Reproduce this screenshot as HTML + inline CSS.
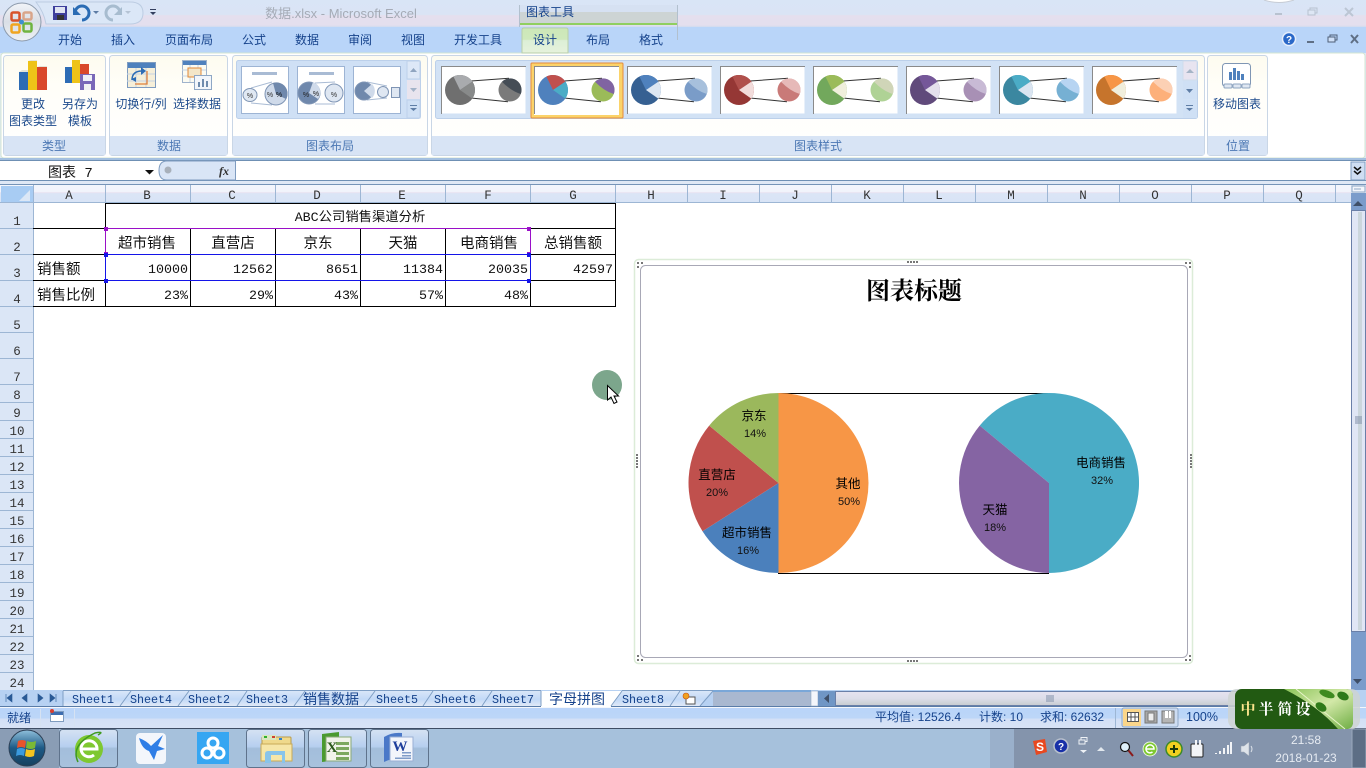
<!DOCTYPE html>
<html lang="zh">
<head>
<meta charset="utf-8">
<title>数据.xlsx - Microsoft Excel</title>
<style>
html,body{margin:0;padding:0;background:#fff;width:1366px;height:768px;overflow:hidden}
svg{display:block;position:absolute;left:0;top:0}
text{font-family:"Liberation Sans","Noto Sans CJK SC",sans-serif;font-size:12px;fill:#15428b}
.m{text-anchor:middle}
.e{text-anchor:end}
.mono{font-family:"Liberation Mono","Noto Sans CJK SC",monospace;font-size:13.33px;fill:#111}
.cell{font-family:"Liberation Mono","Noto Sans CJK SC",monospace;font-size:14.5px;fill:#111}
.hd{font-family:"Liberation Mono",monospace;font-size:12.5px;fill:#333}
.tab{font-family:"Liberation Mono",monospace;font-size:11.7px;fill:#15428b}
.cjkt{font-size:14px;fill:#15428b}
.rb{font-size:12px;fill:#1c4a8c}
.gl{font-size:12px;fill:#4c78b4}
.lb{font-size:12.5px;fill:#000}
.pc{font-size:11px;fill:#111}
</style>
</head>
<body>
<svg width="1366" height="768" viewBox="0 0 1366 768" xmlns="http://www.w3.org/2000/svg">
<defs>
<linearGradient id="hdr" x1="0" y1="0" x2="0" y2="1"><stop offset="0" stop-color="#f3f6fc"/><stop offset=".38" stop-color="#f1f3fb"/><stop offset=".42" stop-color="#e8e2f0"/><stop offset=".48" stop-color="#dbe5f6"/><stop offset="1" stop-color="#d8e4f6"/></linearGradient>
<linearGradient id="title" x1="0" y1="0" x2="0" y2="1"><stop offset="0" stop-color="#d9e5f6"/><stop offset=".54" stop-color="#dae4f5"/><stop offset=".58" stop-color="#e5dfee"/><stop offset=".93" stop-color="#e4dfee"/><stop offset="1" stop-color="#cfdcef"/></linearGradient>
<linearGradient id="grp" x1="0" y1="0" x2="0" y2="1"><stop offset="0" stop-color="#fdfbef"/><stop offset=".3" stop-color="#fffef8"/><stop offset="1" stop-color="#ffffff"/></linearGradient>
<linearGradient id="tabg" x1="0" y1="0" x2="0" y2="1"><stop offset="0" stop-color="#d8e6f8"/><stop offset=".55" stop-color="#c2d9f7"/><stop offset="1" stop-color="#e0e9f7"/></linearGradient>
<linearGradient id="actv" x1="0" y1="0" x2="0" y2="1"><stop offset="0" stop-color="#cce8b8"/><stop offset=".45" stop-color="#cfe9bc"/><stop offset=".5" stop-color="#dcefd6"/><stop offset="1" stop-color="#e6f2dc"/></linearGradient>
<linearGradient id="stat" x1="0" y1="0" x2="0" y2="1"><stop offset="0" stop-color="#b9d4f9"/><stop offset=".5" stop-color="#bcd6f8"/><stop offset=".55" stop-color="#d3e0f6"/><stop offset="1" stop-color="#d8e3f6"/></linearGradient>
<linearGradient id="task" x1="0" y1="0" x2="0" y2="1"><stop offset="0" stop-color="#d5e2f3"/><stop offset=".45" stop-color="#b6cfef"/><stop offset=".5" stop-color="#a3bedb"/><stop offset="1" stop-color="#a8c2dd"/></linearGradient>
<linearGradient id="hsc" x1="0" y1="0" x2="0" y2="1"><stop offset="0" stop-color="#e6e3f0"/><stop offset=".5" stop-color="#dcdde9"/><stop offset="1" stop-color="#c7ccd0"/></linearGradient>
<linearGradient id="orb" x1="0" y1="0" x2="0" y2="1"><stop offset="0" stop-color="#8fc0dc"/><stop offset=".5" stop-color="#1d5a86"/><stop offset="1" stop-color="#16405f"/></linearGradient>
<linearGradient id="office" x1="0" y1="0" x2="0" y2="1"><stop offset="0" stop-color="#f2f4f8"/><stop offset=".5" stop-color="#d9dee6"/><stop offset="1" stop-color="#eef1f5"/></linearGradient>
<linearGradient id="leaf" x1="0" y1="0" x2="1" y2="1"><stop offset="0" stop-color="#8cc45a"/><stop offset=".5" stop-color="#d3e8a8"/><stop offset="1" stop-color="#6fae44"/></linearGradient>
<path id="bt" d="M19 24L12.4 10.500A15 15 0 0 1 31.400 15.600Z"/>
<path id="br" d="M19 24L31.400 15.600A15 15 0 0 1 31.290 32.600Z"/>
<path id="st" d="M61 15.700A11.500 11.500 0 0 1 79.800 28Q70 25 61 15.700Z"/>
<g id="tl"><rect x=".5" y=".5" width="84" height="47" fill="#fff"/><path d="M.5 48V.5H85" fill="none" stroke="#8a8a8a"/><path d="M30 15L68 12.300M30 32L67 35.700" stroke="#333" stroke-width="1" fill="none"/></g>
<g id="lay"><rect x=".5" y=".5" width="47" height="47" fill="#fff" stroke="#9db4d4"/></g>
</defs>

<!-- title bar -->
<rect x="0" y="0" width="1366" height="27" fill="url(#title)"/>
<!-- tab row -->
<rect x="0" y="27" width="1366" height="26" fill="#b9d5f9"/>
<!-- ribbon back -->
<rect x="0" y="53" width="1366" height="107" fill="#dde8f6"/>
<rect x="1" y="53" width="1364" height="105" rx="3" fill="#fff" stroke="#d4e6d2"/>
<rect x="0" y="158" width="1366" height="3" fill="#a4c0e0"/>

<!-- QAT -->
<path d="M36 2H130Q143 2 143 13Q143 24 130 24H46Q44 12 36 2Z" fill="#dbe7f7" stroke="#bccce2"/>
<circle cx="22" cy="22" r="19" fill="url(#office)" stroke="#8d9bad"/>
<g fill="none" stroke-width="2.500">
<rect x="11.500" y="12.500" width="8" height="8" rx="1.500" stroke="#d8532a"/>
<rect x="23.500" y="12.500" width="8" height="7" rx="1.500" stroke="#d9a58a"/>
<rect x="11.500" y="24.500" width="8" height="8" rx="1.500" stroke="#f0a51f"/>
<rect x="23.500" y="23.500" width="8" height="8" rx="1.500" stroke="#6fb43f"/>
</g>
<circle cx="21.500" cy="22" r="2.500" fill="#3f8fd0"/>
<rect x="53" y="6" width="14" height="14" fill="#3d3f9c"/><rect x="55" y="7" width="10" height="6" fill="#dfe4f2"/><rect x="57" y="15" width="7" height="5" fill="#333"/>
<path d="M75 13A7 7 0 1 1 82 20" fill="none" stroke="#2b6cb4" stroke-width="3"/><path d="M73 7V15H81Z" fill="#2b6cb4"/>
<path d="M93 11h6l-3 3z" fill="#5d7ca4"/>
<path d="M120 13A7 7 0 1 0 113 20" fill="none" stroke="#a7bccf" stroke-width="3"/><path d="M122 7V15H114Z" fill="#a7bccf"/>
<path d="M125 11h6l-3 3z" fill="#b5c3d4"/>
<path d="M150 9h6v1h-6zM150 12h6l-3 3z" fill="#333f5f"/>
<text x="341" y="18" class="m" style="fill:#a5abb6;font-size:13px">数据.xlsx - Microsoft Excel</text>

<!-- window buttons -->
<path d="M1264 0Q1279 5 1294 0" fill="#fff" stroke="#c7ccd5"/>
<path d="M1275 13h7v2h-7z" fill="#b8c2d0"/>
<rect x="1310" y="8" width="7" height="5" fill="none" stroke="#b8c2d0"/><rect x="1308" y="10" width="7" height="5" fill="#dde6f4" stroke="#b8c2d0"/>
<path d="M1345 8l8 8M1353 8l-8 8" stroke="#bcc6d4" stroke-width="2"/>

<!-- contextual tab -->
<rect x="519" y="5" width="159" height="7" fill="#d6e1f2"/>
<rect x="519" y="12" width="159" height="11" fill="#cdd4d4"/>
<rect x="519" y="23" width="159" height="2" fill="#90cf60"/>
<path d="M519.500 5V27M677.500 5V40" stroke="#b2c0ce"/>
<text x="550" y="16" class="m" style="font-size:12px">图表工具</text>

<!-- tabs -->
<path d="M522 53V30Q522 28 524 28H566Q568 28 568 30V53Z" fill="url(#actv)" stroke="#b9cfa8"/>
<text x="70" y="44" class="m">开始</text>
<text x="123" y="44" class="m">插入</text>
<text x="189" y="44" class="m">页面布局</text>
<text x="254" y="44" class="m">公式</text>
<text x="307" y="44" class="m">数据</text>
<text x="360" y="44" class="m">审阅</text>
<text x="413" y="44" class="m">视图</text>
<text x="478" y="44" class="m">开发工具</text>
<text x="545" y="44" class="m">设计</text>
<text x="598" y="44" class="m">布局</text>
<text x="651" y="44" class="m">格式</text>
<circle cx="1289" cy="39" r="6.500" fill="#2a68c8" stroke="#e6eefb" stroke-width="1.500"/><text x="1289" y="43" class="m" style="fill:#fff;font-size:10px;font-weight:bold">?</text>
<path d="M1307 41h7v2h-7z" fill="#5f6f85"/>
<rect x="1330" y="35" width="7" height="5" fill="none" stroke="#4f6078"/><rect x="1328" y="37" width="7" height="5" fill="#cfe0f8" stroke="#4f6078"/>
<path d="M1351 35l7 8M1358 35l-7 8" stroke="#5f6f85" stroke-width="2"/>

<!-- ribbon groups -->
<g stroke="#c9d6e6">
<rect x="3.500" y="55.500" width="102" height="100" rx="3" fill="url(#grp)"/>
<rect x="109.500" y="55.500" width="118" height="100" rx="3" fill="url(#grp)"/>
<rect x="232.500" y="55.500" width="195" height="100" rx="3" fill="url(#grp)"/>
<rect x="431.500" y="55.500" width="773" height="100" rx="3" fill="url(#grp)"/>
<rect x="1207.500" y="55.500" width="60" height="100" rx="3" fill="url(#grp)"/>
</g>
<rect x="4" y="136" width="101" height="19" fill="#d8e4f5"/>
<rect x="110" y="136" width="117" height="19" fill="#d8e4f5"/>
<rect x="233" y="136" width="194" height="19" fill="#d8e4f5"/>
<rect x="432" y="136" width="772" height="19" fill="#d8e4f5"/>
<rect x="1208" y="136" width="59" height="19" fill="#d8e4f5"/>
<text x="54" y="150" class="m gl">类型</text>
<text x="169" y="150" class="m gl">数据</text>
<text x="330" y="150" class="m gl">图表布局</text>
<text x="818" y="150" class="m gl">图表样式</text>
<text x="1238" y="150" class="m gl">位置</text>

<text x="33" y="108" class="m rb">更改</text>
<text x="33" y="125" class="m rb">图表类型</text>
<text x="80" y="108" class="m rb">另存为</text>
<text x="80" y="125" class="m rb">模板</text>
<text x="141" y="108" class="m rb">切换行/列</text>
<text x="197" y="108" class="m rb">选择数据</text>
<text x="1237" y="108" class="m rb">移动图表</text>

<!-- chart type icons -->
<rect x="19" y="72" width="9" height="18" fill="#2d6cb5"/><rect x="28" y="61" width="9" height="29" fill="#eec318"/><rect x="37" y="67" width="10" height="23" fill="#d9482b"/>
<path d="M19 72l3-2h6v2zM28 61l3-1h6v1zM37 67l3-1h7v1z" fill="#e3e3d8"/>
<rect x="65" y="67" width="7" height="16" fill="#2d6cb5"/><rect x="72" y="60" width="8" height="23" fill="#eec318"/><rect x="80" y="64" width="9" height="18" fill="#d9482b"/>
<rect x="80" y="74" width="15" height="16" fill="#7a68b8"/><rect x="83" y="75" width="9" height="6" fill="#eef0f8"/><rect x="84" y="84" width="7" height="6" fill="#f2f2f2"/>

<!-- switch / select icons -->
<rect x="127.500" y="62.500" width="28" height="25" fill="#f6efd9" stroke="#7f9cc0"/>
<rect x="128" y="63" width="27" height="5" fill="#4f81bd"/>
<path d="M127 74h28M127 81h28M136 68v19M146 68v19" stroke="#c5d3e4"/>
<path d="M132 80Q132 71 142 71" fill="none" stroke="#2d6cb5" stroke-width="1.500"/><path d="M141 67l5 4-5 4z" fill="#2d6cb5"/>
<path d="M147 71V84H135" fill="none" stroke="#e0803a" stroke-width="1.300"/><path d="M131 79l5 -2v5z" fill="#2d6cb5"/>
<rect x="182.500" y="60.500" width="24" height="22" fill="#fbfbf2" stroke="#9fb3cc"/>
<rect x="183" y="61" width="23" height="4" fill="#4f81bd"/>
<path d="M182 70h24M182 76h24M190 65v17M198 65v17" stroke="#c5d3e4"/>
<rect x="188" y="68" width="13" height="9" fill="#f3e6c8" stroke="#e0883a"/>
<rect x="194.500" y="75.500" width="17" height="14" fill="#f2f6fb" stroke="#8ea7c5"/>
<path d="M198 87v-5h2v5zM202 87v-8h2v8zM206 87v-6h2v6z" fill="#6f8cae"/>

<!-- layout gallery -->
<rect x="236.500" y="60.500" width="184" height="58" rx="2" fill="#cfe0f5" stroke="#bcd0ea"/>
<use href="#lay" x="241" y="66"/><use href="#lay" x="297" y="66"/><use href="#lay" x="353" y="66"/>
<rect x="252" y="72" width="25" height="3" fill="#a9bbd4"/>
<rect x="309" y="72" width="25" height="3" fill="#a9bbd4"/>
<path d="M251 88L272 82M251 103L272 105" stroke="#a9bbd4" fill="none"/>
<ellipse cx="250" cy="95" rx="7" ry="6.500" fill="#e0e8f3" stroke="#7f95b5"/>
<circle cx="276" cy="94" r="11" fill="#cfdaea" stroke="#7f95b5"/><path d="M276 94L273 83A11 11 0 0 1 286 99Z" fill="#6f88ac"/>
<text x="250" y="98" class="m" style="font-size:7px;fill:#333">%</text><text x="270" y="97" class="m" style="font-size:7px;fill:#333">%</text><text x="279" y="97" class="m" style="font-size:7px;fill:#111">%</text>
<path d="M315 83L335 82M315 104L335 104" stroke="#a9bbd4" fill="none"/>
<circle cx="309" cy="93" r="11" fill="#6f88ac" stroke="#7f95b5"/><path d="M309 93L313 82A11 11 0 0 1 318 99Z" fill="#cfdaea"/>
<circle cx="334" cy="93" r="9" fill="#dfe7f2" stroke="#7f95b5"/>
<text x="306" y="97" class="m" style="font-size:7px;fill:#222">%</text><text x="316" y="96" class="m" style="font-size:7px;fill:#222">%</text><text x="334" y="97" class="m" style="font-size:7px;fill:#333">%</text>
<path d="M367 82L387 86M367 100L387 98" stroke="#a9bbd4" fill="none"/>
<circle cx="364" cy="91" r="9" fill="#6f88ac" stroke="#7f95b5"/><path d="M364 91L372 84A10 10 0 0 1 372 98Z" fill="#cfdaea"/>
<circle cx="383" cy="92" r="5.500" fill="#dfe7f2" stroke="#7f95b5"/>
<rect x="391.500" y="87.500" width="8" height="10" fill="#dfe7f2" stroke="#7f95b5"/>
<rect x="407" y="61" width="13" height="18" fill="#dde8f7" stroke="#bcd0ea"/><rect x="407" y="80" width="13" height="19" fill="#e8e4ee"/><rect x="407" y="100" width="13" height="18" fill="#cfe0f5" stroke="#bcd0ea"/>
<path d="M410 72l3.500-4 3.500 4z" fill="#8fa5c0"/><path d="M410 88h7l-3.500 4z" fill="#a3b3c8"/><path d="M410 105h7v1h-7zM410 108h7l-3.500 3z" fill="#5f7ea6"/>

<!-- chart styles gallery -->
<rect x="435.500" y="60.500" width="762" height="58" rx="2" fill="#d2e2f5" stroke="#bcd0ea"/>
<rect x="531" y="63" width="92" height="55" rx="1" fill="#fbd36a" stroke="#e58b3c"/>
<rect x="534" y="66" width="85" height="49" fill="#fff"/>
<g transform="translate(441,66)"><use href="#tl"/><circle cx="19" cy="24" r="15" fill="#6f6f6f"/><use href="#bt" fill="#a9abae"/><use href="#br" fill="#888a8a"/><circle cx="69" cy="24" r="11.500" fill="#7a7a7a"/><use href="#st" fill="#454d56"/></g>
<g transform="translate(534,66)"><use href="#tl"/><circle cx="19" cy="24" r="15" fill="#4f81bd"/><use href="#bt" fill="#c0504d"/><use href="#br" fill="#4bacc6"/><circle cx="69" cy="24" r="11.500" fill="#9bbb59"/><use href="#st" fill="#8064a2"/></g>
<g transform="translate(627,66)"><use href="#tl"/><circle cx="19" cy="24" r="15" fill="#366092"/><use href="#bt" fill="#4f81bd"/><use href="#br" fill="#dce6f2"/><circle cx="69" cy="24" r="11.500" fill="#7a9cc8"/><use href="#st" fill="#a7c0dc"/></g>
<g transform="translate(720,66)"><use href="#tl"/><circle cx="19" cy="24" r="15" fill="#953735"/><use href="#bt" fill="#b0504c"/><use href="#br" fill="#f2dcdb"/><circle cx="69" cy="24" r="11.500" fill="#c97a78"/><use href="#st" fill="#e6b9b8"/></g>
<g transform="translate(813,66)"><use href="#tl"/><circle cx="19" cy="24" r="15" fill="#72a85c"/><use href="#bt" fill="#9bbb59"/><use href="#br" fill="#f0efdc"/><circle cx="69" cy="24" r="11.500" fill="#afd295"/><use href="#st" fill="#d0d5b8"/></g>
<g transform="translate(906,66)"><use href="#tl"/><circle cx="19" cy="24" r="15" fill="#604a7b"/><use href="#bt" fill="#755799"/><use href="#br" fill="#e4dfec"/><circle cx="69" cy="24" r="11.500" fill="#a890b5"/><use href="#st" fill="#c8bad5"/></g>
<g transform="translate(999,66)"><use href="#tl"/><circle cx="19" cy="24" r="15" fill="#3b87a0"/><use href="#bt" fill="#4bacc6"/><use href="#br" fill="#dbe5f1"/><circle cx="69" cy="24" r="11.500" fill="#76b0d3"/><use href="#st" fill="#b7d4f2"/></g>
<g transform="translate(1092,66)"><use href="#tl"/><circle cx="19" cy="24" r="15" fill="#c6742c"/><use href="#bt" fill="#f79646"/><use href="#br" fill="#f0eedc"/><circle cx="69" cy="24" r="11.500" fill="#fdb07a"/><use href="#st" fill="#fcd0b4"/></g>
<rect x="1183" y="61" width="14" height="19" fill="#e8e4f0" stroke="#cfdcec"/><rect x="1183" y="81" width="14" height="18" fill="#cfe0f5"/><rect x="1183" y="100" width="14" height="18" fill="#cfe0f5"/>
<path d="M1186 73l4-4 4 4z" fill="#a5b4c6"/><path d="M1186 89h7l-3.500 4z" fill="#5f7ea6"/><path d="M1186 105h7v1h-7zM1186 108h7l-3.500 3z" fill="#5f7ea6"/>

<!-- move chart icon -->
<rect x="1222.500" y="63.500" width="28" height="23" rx="3" fill="#fff" stroke="#7f96b4"/>
<rect x="1224" y="84" width="8" height="4" rx="1" fill="#dfe7f2" stroke="#8fa5c0"/><rect x="1233" y="84" width="8" height="4" rx="1" fill="#dfe7f2" stroke="#8fa5c0"/><rect x="1242" y="84" width="8" height="4" rx="1" fill="#dfe7f2" stroke="#8fa5c0"/>
<path d="M1229 72h3v8h-3zM1233 68h3v12h-3zM1237 71h3v9h-3zM1241 74h3v6h-3z" fill="#4f81bd"/>

<!-- formula bar -->
<rect x="0" y="160" width="1366" height="21" fill="#fff"/>
<path d="M0 160.500H1366M0 180.500H1366" stroke="#6f90b4"/>
<rect x="0" y="181" width="1366" height="4" fill="#dfe8f5"/>
<path d="M0 184.500H1366" stroke="#7594b8"/>
<text x="48" y="177" style="fill:#111;font-size:14px;font-family:'Liberation Mono','Noto Sans CJK SC',monospace">图表 7</text>
<path d="M145 170h9l-4.500 4.500z" fill="#111"/>
<path d="M235.500 161H167Q159 161 159 170.500Q159 180 167 180H235.500Z" fill="#d9e5f6" stroke="#7f9cc0"/>
<circle cx="168" cy="170" r="3.500" fill="#a8b0ba"/>
<text x="224" y="175" class="m" style="font-family:'Liberation Serif',serif;font-style:italic;font-weight:bold;font-size:12px;fill:#333">fx</text>
<rect x="1351" y="162" width="14" height="18" fill="#cfdef2" stroke="#7f9cc0"/>
<path d="M1354 167l3.500 3 3.500-3M1354 171l3.500 3 3.500-3" fill="none" stroke="#111" stroke-width="1.500"/>

<!-- column headers -->
<rect x="0" y="185" width="1351" height="18" fill="url(#hdr)"/>
<rect x="1" y="186" width="32" height="17" fill="#a8ccf3"/>
<path d="M30 190V201H19Z" fill="#dbe7f6"/>
<path d="M0 202.500H1351M33.500 185V203M105.500 185V203M190.500 185V203M275.500 185V203M360.500 185V203M445.500 185V203M530.500 185V203M615.500 185V203M687.500 185V203M759.500 185V203M831.500 185V203M903.500 185V203M975.500 185V203M1047.500 185V203M1119.500 185V203M1191.500 185V203M1263.500 185V203M1335.500 185V203" stroke="#9db6d4"/>
<text class="hd m" x="69" y="199">A</text><text class="hd m" x="147" y="199">B</text><text class="hd m" x="232" y="199">C</text><text class="hd m" x="317" y="199">D</text><text class="hd m" x="402" y="199">E</text><text class="hd m" x="488" y="199">F</text><text class="hd m" x="573" y="199">G</text><text class="hd m" x="651" y="199">H</text><text class="hd m" x="723" y="199">I</text><text class="hd m" x="795" y="199">J</text><text class="hd m" x="867" y="199">K</text><text class="hd m" x="939" y="199">L</text><text class="hd m" x="1011" y="199">M</text><text class="hd m" x="1083" y="199">N</text><text class="hd m" x="1155" y="199">O</text><text class="hd m" x="1227" y="199">P</text><text class="hd m" x="1299" y="199">Q</text>

<!-- row headers -->
<rect x="0" y="203" width="33" height="487" fill="#dbe6f6"/>
<path d="M33.500 203V690M0 228.500H33M0 254.500H33M0 280.500H33M0 306.500H33M0 332.500H33M0 358.500H33M0 384.500H33M0 402.500H33M0 420.500H33M0 438.500H33M0 456.500H33M0 474.500H33M0 492.500H33M0 510.500H33M0 528.500H33M0 546.500H33M0 564.500H33M0 582.500H33M0 600.500H33M0 618.500H33M0 636.500H33M0 654.500H33M0 672.500H33" stroke="#9db6d4"/>
<text class="hd m" x="17" y="225">1</text><text class="hd m" x="17" y="251">2</text><text class="hd m" x="17" y="277">3</text><text class="hd m" x="17" y="303">4</text><text class="hd m" x="17" y="329">5</text><text class="hd m" x="17" y="355">6</text><text class="hd m" x="17" y="381">7</text><text class="hd m" x="17" y="399">8</text><text class="hd m" x="17" y="417">9</text><text class="hd m" x="17" y="435">10</text><text class="hd m" x="17" y="453">11</text><text class="hd m" x="17" y="471">12</text><text class="hd m" x="17" y="489">13</text><text class="hd m" x="17" y="507">14</text><text class="hd m" x="17" y="525">15</text><text class="hd m" x="17" y="543">16</text><text class="hd m" x="17" y="561">17</text><text class="hd m" x="17" y="579">18</text><text class="hd m" x="17" y="597">19</text><text class="hd m" x="17" y="615">20</text><text class="hd m" x="17" y="633">21</text><text class="hd m" x="17" y="651">22</text><text class="hd m" x="17" y="669">23</text><text class="hd m" x="17" y="687">24</text>

<!-- table -->
<path d="M105.500 203V306M105 203.500H616M33 228.500H616M33 254.500H616M33 280.500H616M33 306.500H616M190.500 228V306M275.500 228V306M360.500 228V306M445.500 228V306M530.500 228V306M615.500 203V306" stroke="#000" fill="none"/>
<rect x="105.500" y="228.500" width="425" height="26" fill="none" stroke="#9a10c8"/>
<rect x="105.500" y="254.500" width="425" height="26" fill="none" stroke="#1414e8"/>
<g fill="#9a10c8"><rect x="104" y="227" width="4" height="4"/><rect x="527" y="227" width="4" height="4"/><rect x="104" y="252" width="4" height="3"/><rect x="527" y="252" width="4" height="3"/></g>
<g fill="#1414e8"><rect x="104" y="253" width="4" height="4"/><rect x="527" y="253" width="4" height="4"/><rect x="104" y="279" width="4" height="4"/><rect x="527" y="279" width="4" height="4"/></g>
<text x="360" y="221" class="mono m">ABC公司销售渠道分析</text>
<text x="147" y="248" class="cell m">超市销售</text><text x="233" y="248" class="cell m">直营店</text><text x="318" y="248" class="cell m">京东</text><text x="403" y="248" class="cell m">天猫</text><text x="489" y="248" class="cell m">电商销售</text><text x="573" y="248" class="cell m">总销售额</text>
<text x="37" y="274" class="cell">销售额</text><text x="37" y="300" class="cell">销售比例</text>
<text x="188" y="273" class="mono e">10000</text><text x="273" y="273" class="mono e">12562</text><text x="358" y="273" class="mono e">8651</text><text x="443" y="273" class="mono e">11384</text><text x="528" y="273" class="mono e">20035</text><text x="613" y="273" class="mono e">42597</text>
<text x="188" y="299" class="mono e">23%</text><text x="273" y="299" class="mono e">29%</text><text x="358" y="299" class="mono e">43%</text><text x="443" y="299" class="mono e">57%</text><text x="528" y="299" class="mono e">48%</text>

<!-- cursor -->
<circle cx="607" cy="385" r="15" fill="#7ca68c"/>
<path d="M607.500 385.500V400L611 397L614 403.500L617 402L614 396L618.500 396Z" fill="#fff" stroke="#000"/>

<!-- chart -->
<rect x="634.500" y="259.500" width="558" height="404" rx="4" fill="#fff" stroke="#dcecd8" stroke-width="1.500"/>
<rect x="640.500" y="265.500" width="547" height="392" rx="5" fill="#fff" stroke="#a8a8b6"/>
<g fill="#777">
<rect x="907" y="261" width="2" height="2"/><rect x="910" y="261" width="2" height="2"/><rect x="913" y="261" width="2" height="2"/><rect x="916" y="261" width="2" height="2"/>
<rect x="907" y="660" width="2" height="2"/><rect x="910" y="660" width="2" height="2"/><rect x="913" y="660" width="2" height="2"/><rect x="916" y="660" width="2" height="2"/>
<rect x="636" y="454" width="2" height="2"/><rect x="636" y="457" width="2" height="2"/><rect x="636" y="460" width="2" height="2"/><rect x="636" y="463" width="2" height="2"/><rect x="636" y="466" width="2" height="2"/>
<rect x="1190" y="454" width="2" height="2"/><rect x="1190" y="457" width="2" height="2"/><rect x="1190" y="460" width="2" height="2"/><rect x="1190" y="463" width="2" height="2"/><rect x="1190" y="466" width="2" height="2"/>
<rect x="637" y="262" width="2" height="2"/><rect x="641" y="262" width="2" height="2"/><rect x="637" y="266" width="2" height="2"/>
<rect x="1185" y="262" width="2" height="2"/><rect x="1189" y="262" width="2" height="2"/><rect x="1189" y="266" width="2" height="2"/>
<rect x="637" y="659" width="2" height="2"/><rect x="641" y="659" width="2" height="2"/><rect x="637" y="655" width="2" height="2"/>
<rect x="1185" y="659" width="2" height="2"/><rect x="1189" y="659" width="2" height="2"/><rect x="1189" y="655" width="2" height="2"/>
</g>
<text x="914" y="299" class="m" style="font-family:'Noto Serif CJK SC',serif;font-weight:bold;font-size:24px;fill:#000">图表标题</text>
<path d="M778 393.500H1049M778 573.500H1049" stroke="#000" fill="none"/>
<path d="M778.500 393A90 90 0 0 1 778.500 573Z" fill="#f79646"/>
<path d="M778.500 483L702.500 531.200A90 90 0 0 0 778.500 573Z" fill="#4b80bc"/>
<path d="M778.500 483L709.200 425.600A90 90 0 0 0 702.500 531.200Z" fill="#c0504d"/>
<path d="M778.500 483L778.500 393A90 90 0 0 0 709.200 425.600Z" fill="#9bb85c"/>
<path d="M1049 483L979.700 425.600A90 90 0 1 1 1049 573Z" fill="#4aacc6"/>
<path d="M1049 483L1049 573A90 90 0 0 1 979.700 425.600Z" fill="#8564a3"/>
<text x="754" y="420" class="m lb">京东</text><text x="755" y="437" class="m pc">14%</text>
<text x="717" y="479" class="m lb">直营店</text><text x="717" y="496" class="m pc">20%</text>
<text x="747" y="537" class="m lb">超市销售</text><text x="748" y="554" class="m pc">16%</text>
<text x="848" y="488" class="m lb">其他</text><text x="849" y="505" class="m pc">50%</text>
<text x="1101" y="467" class="m lb">电商销售</text><text x="1102" y="484" class="m pc">32%</text>
<text x="995" y="514" class="m lb">天猫</text><text x="995" y="531" class="m pc">18%</text>

<!-- v scrollbar -->
<rect x="1351" y="185" width="15" height="505" fill="#7b9ccb"/>
<rect x="1351" y="185" width="15" height="8" fill="#e3ebf7"/>
<rect x="1352" y="186" width="13" height="6" fill="#f3f6fc" stroke="#8ea7c5"/>
<path d="M1354 189h7" stroke="#8ea7c5"/>
<path d="M1353 206l5-5 5 5z" fill="#3f4f68"/>
<rect x="1351.500" y="210.500" width="14" height="421" fill="#e0e6f5" stroke="#6a7fa8"/>
<rect x="1358" y="212" width="4" height="418" fill="#cbd6dc"/>
<path d="M1355 417h7M1355 419h7M1355 421h7M1355 423h7" stroke="#7f8fa8"/>
<path d="M1353 679h9l-4.500 5z" fill="#3f4f68"/>

<!-- sheet tabs -->
<rect x="0" y="690" width="1366" height="17" fill="#b7d1f2"/>
<rect x="713" y="691" width="98" height="15" fill="#a9b8d0"/><rect x="713" y="690" width="98" height="2" fill="#7aa7d8"/>
<polygon points="63,691 131,691 120,706 63,706" fill="url(#tabg)"/>
<polygon points="131,691 189,691 178,706 120,706" fill="url(#tabg)"/>
<polygon points="189,691 247,691 237,706 178,706" fill="url(#tabg)"/>
<polygon points="247,691 305,691 294,706 237,706" fill="url(#tabg)"/>
<polygon points="305,691 375,691 364,706 294,706" fill="url(#tabg)"/>
<polygon points="375,691 433,691 423,706 364,706" fill="url(#tabg)"/>
<polygon points="433,691 492,691 482,706 423,706" fill="url(#tabg)"/>
<polygon points="492,691 541,691 541,706 482,706" fill="url(#tabg)"/>
<polygon points="622,691 680,691 670,706 611,706" fill="url(#tabg)"/>
<polygon points="680,691 713,691 700,706 670,706" fill="url(#tabg)"/>
<polygon points="541,691 622,691 611,707 541,707" fill="#fff"/>
<path d="M120 706L131 691M178 706L189 691M237 706L247 691M294 706L305 691M364 706L375 691M423 706L433 691M482 706L492 691M611 706L622 691M670 706L680 691M700 706L713 691M63 691V706M541 691V706M63 690.500H541M622 690.500H713" stroke="#7f9fc5" fill="none"/>
<path d="M0 706.500H541M611 706.500H1351" stroke="#5a7ca8"/>
<path d="M6 694v8M12 694l-5 4 5 4zM27 694l-5 4 5 4zM38 694l5 4-5 4zM50 694l5 4-5 4zM56 694v8" fill="#2a5a96" stroke="#2a5a96" stroke-width=".6"/>
<text x="93" y="703" class="tab m">Sheet1</text><text x="151" y="703" class="tab m">Sheet4</text><text x="209" y="703" class="tab m">Sheet2</text><text x="267" y="703" class="tab m">Sheet3</text>
<text x="331" y="704" class="cjkt m">销售数据</text>
<text x="397" y="703" class="tab m">Sheet5</text><text x="455" y="703" class="tab m">Sheet6</text><text x="513" y="703" class="tab m">Sheet7</text>
<text x="577" y="704" class="cjkt m">字母拼图</text>
<text x="643" y="703" class="tab m">Sheet8</text>
<rect x="686" y="697" width="9" height="7" fill="#fff" stroke="#555"/><circle cx="686" cy="696" r="3" fill="#f0a020" stroke="#c85010" stroke-width=".6"/>

<!-- h scrollbar -->
<rect x="811" y="691" width="7" height="15" fill="#f4f6fb" stroke="#8ea7c5" stroke-width=".6"/>
<rect x="818" y="691" width="17" height="15" fill="#7096c5"/>
<path d="M824 698.500l5-4.500v9z" fill="#3f4f68"/>
<rect x="835.500" y="691.500" width="516" height="14" fill="url(#hsc)" stroke="#6a7fa8"/>
<path d="M1047 695v7M1049 695v7M1051 695v7M1053 695v7" stroke="#7f8fa8"/>

<!-- status bar -->
<rect x="0" y="707" width="1366" height="22" fill="url(#stat)"/>
<path d="M0 707.500H1366" stroke="#f4f7fc"/>
<path d="M0 728.500H1366" stroke="#3d4c64"/>
<text x="7" y="722" style="fill:#15428b">就绪</text>
<path d="M40.500 709V727M74.500 709V727" stroke="#d6e2f2"/>
<rect x="50.500" y="711.500" width="13" height="10" fill="#fff" stroke="#7f9cc0"/><rect x="51" y="712" width="12" height="3" fill="#3d6db0"/><circle cx="52" cy="711" r="2" fill="#d84030"/>
<text x="875" y="721">平均值: 12526.4</text>
<text x="979" y="721">计数: 10</text>
<text x="1040" y="721">求和: 62632</text>
<path d="M1115.500 708V728" stroke="#9db6d4"/>
<rect x="1122" y="708" width="56" height="19" rx="2" fill="#cddcf2" stroke="#8ea7c5"/>
<rect x="1123" y="709" width="18" height="17" fill="#fbd68a"/>
<rect x="1127.500" y="712.500" width="11" height="9" fill="#fff" stroke="#555"/><path d="M1131 712v9M1135 712v9M1127 717h11" stroke="#555"/>
<rect x="1145" y="711" width="12" height="12" fill="#a9a9a9" stroke="#777"/><rect x="1148" y="713" width="6" height="8" fill="#eee" stroke="#777"/>
<rect x="1162" y="711" width="12" height="12" fill="#b5b5b5" stroke="#777"/><path d="M1165 711v7h3v-7zM1169 711v7h2v-7z" fill="#fff"/>
<text x="1186" y="721" style="font-size:12.500px">100%</text>

<!-- taskbar -->
<rect x="0" y="729" width="1366" height="39" fill="#a6c1dc"/>
<rect x="0" y="729" width="59" height="39" fill="#8a9db5"/>
<rect x="990" y="729" width="24" height="39" fill="#9ab0cb"/>
<rect x="1014" y="729" width="338" height="39" fill="#8494ac"/>
<rect x="1352" y="729" width="14" height="39" fill="#5d6e85" stroke="#9aa9bd"/>
<circle cx="27" cy="748" r="18" fill="url(#orb)" stroke="#2c3f55"/>
<path d="M18 741Q22 739 26 741L25 748Q21 746 17 748Z" fill="#e8542c"/>
<path d="M27 741Q31 743 36 741L35 748Q31 750 26 748Z" fill="#7ab935"/>
<path d="M17 749Q21 747 25 749L24 756Q20 754 16 756Z" fill="#3b9ade"/>
<path d="M26 749Q30 751 35 749L34 756Q30 758 25 756Z" fill="#f5c420"/>
<rect x="59.500" y="729.500" width="58" height="38" rx="3" fill="url(#task)" stroke="#5f738c"/>
<rect x="246.500" y="729.500" width="58" height="38" rx="3" fill="url(#task)" stroke="#5f738c"/>
<rect x="308.500" y="729.500" width="58" height="38" rx="3" fill="url(#task)" stroke="#5f738c"/>
<rect x="370.500" y="729.500" width="58" height="38" rx="3" fill="url(#task)" stroke="#5f738c"/>
<circle cx="89" cy="749" r="14" fill="#7ec830"/>
<path d="M82 749H97A8 8 0 1 0 94 755" fill="none" stroke="#fff" stroke-width="3"/>
<path d="M78 762Q70 745 95 733Q105 731 98 735" fill="none" stroke="#3f9a20" stroke-width="1.500"/>
<rect x="136" y="733" width="30" height="31" rx="4" fill="#f3f6fb"/>
<path d="M139 738Q147 741 151 746L163 735L158 746L165 749L157 751L154 760L149 751Q142 749 139 738Z" fill="#2f7ee6"/>
<rect x="197" y="732" width="32" height="32" fill="#36a6f2"/>
<g fill="none" stroke="#fff" stroke-width="3"><circle cx="213" cy="743" r="5"/><circle cx="207" cy="753" r="5"/><circle cx="219" cy="753" r="5"/></g>
<rect x="262" y="737" width="29" height="24" rx="1" fill="#efd98c" stroke="#b79a4c"/>
<rect x="262" y="735" width="14" height="5" fill="#d8e6c0"/><rect x="264" y="736" width="3" height="2" fill="#30b030"/><rect x="272" y="736" width="3" height="2" fill="#d04030"/><rect x="279" y="738" width="3" height="2" fill="#3080d0"/>
<rect x="261" y="744" width="31" height="17" fill="#f6e6a8" stroke="#c8aa58"/>
<path d="M265 763V754Q265 751 268 751H285V763H282V755H271V763Z" fill="#89c4ea"/>
<path d="M322 734L339 732V760L322 762Z" fill="#4a9a30"/>
<rect x="326" y="737" width="25" height="24" fill="#f0f3ea" stroke="#8aaa78"/>
<path d="M336 742h13v3h-13zM336 747h13v3h-13zM336 752h13v3h-13zM336 757h13v3h-13z" fill="#7ca860"/>
<text x="332" y="752" class="m" style="font-family:'Liberation Serif',serif;font-weight:bold;font-size:15px;fill:#2c5a1c">X</text>
<path d="M384 737Q392 732 402 733V759Q392 758 384 762Z" fill="#4a78c8"/>
<rect x="390" y="737" width="23" height="24" fill="#f2f5fb" stroke="#9bb0d4"/>
<path d="M402 752h9v1.500h-9zM402 755h9v1.500h-9zM395 757.500h16v1.500h-16z" fill="#7f9cc8"/>
<text x="400" y="751" class="m" style="font-family:'Liberation Serif',serif;font-weight:bold;font-size:15px;fill:#1f3f9c">W</text>

<!-- tray -->
<path d="M1033 741L1045 739L1047 752L1036 755Z" fill="#e84820"/>
<text x="1040" y="751" class="m" style="fill:#fff;font-weight:bold;font-size:12px">S</text>
<circle cx="1061" cy="746" r="7" fill="#1830a8" stroke="#b8c0cc" stroke-width="1.500"/>
<text x="1061" y="750" class="m" style="fill:#fff;font-size:10px;font-weight:bold">?</text>
<rect x="1081" y="737.500" width="6" height="4" fill="none" stroke="#eef2f6"/><rect x="1079" y="740" width="6" height="4" fill="#8494ac" stroke="#eef2f6"/>
<path d="M1080 750h7l-3.500 3z" fill="#eef2f6"/>
<path d="M1097 751l4-4 4 4z" fill="#e2e8ee"/>
<circle cx="1125" cy="747" r="4.500" fill="#dff0fa" stroke="#111" stroke-width="1.200"/><path d="M1128.500 750.500L1133 756" stroke="#8a1a1a" stroke-width="2"/>
<circle cx="1150" cy="749" r="7" fill="#7ec830" stroke="#e8f4e0"/><path d="M1146 749H1154A4 4 0 1 0 1152.500 752" fill="none" stroke="#fff" stroke-width="1.500"/>
<circle cx="1174" cy="749" r="8" fill="#f0d020" stroke="#3a8a2a" stroke-width="1.500"/><path d="M1170 749h8M1174 745v8" stroke="#1a3a0a" stroke-width="2"/>
<rect x="1191" y="744" width="12" height="13" rx="1" fill="#f2f4f7" stroke="#222"/><path d="M1196 740v5M1200 740v5" stroke="#f2f4f7" stroke-width="2"/>
<path d="M1215 754h2v-1h-2zM1219 754h2v-3h-2zM1223 754h2v-6h-2zM1227 754h2v-9h-2zM1230 754h2v-12h-2z" fill="#f2f4f7"/>
<path d="M1241 746h3l5-4v14l-5-4h-3z" fill="#dfe4ea" stroke="#9aa4b2" stroke-width=".5"/><path d="M1251 746Q1253 749 1251 752" fill="none" stroke="#dfe4ea"/>
<text x="1306" y="744" class="m" style="fill:#e6ebf2;font-size:12px">21:58</text>
<text x="1306" y="762" class="m" style="fill:#e6ebf2;font-size:12px">2018-01-23</text>

<!-- logo -->
<rect x="1228" y="689" width="132" height="40" rx="9" fill="#ced3d2" opacity=".85"/>
<rect x="1235" y="689" width="118" height="40" rx="7" fill="#225a12"/>
<path d="M1284 689H1346Q1353 689 1353 696V722Q1353 729 1346 729H1338Q1318 706 1284 689Z" fill="url(#leaf)"/>
<path d="M1296 689L1345 729" stroke="#e8f4c8" stroke-width="1" fill="none"/>
<ellipse cx="1327" cy="694" rx="8" ry="3.500" fill="#3f8a20" transform="rotate(20 1327 694)"/>
<ellipse cx="1343" cy="696" rx="6" ry="4" fill="#2f7a1a" transform="rotate(25 1343 696)"/>
<ellipse cx="1321" cy="707" rx="6" ry="4" fill="#2f7a1a" transform="rotate(35 1321 707)"/>
<text x="1248" y="714" class="m" style="font-family:'Noto Serif CJK SC',serif;font-size:15px;font-weight:bold;fill:#fbe58c">中</text>
<text x="1266" y="714" class="m" style="font-family:'Noto Serif CJK SC',serif;font-size:15px;font-weight:bold;fill:#fff">半</text>
<text x="1285" y="714" class="m" style="font-family:'Noto Serif CJK SC',serif;font-size:15px;font-weight:bold;fill:#fff">简</text>
<text x="1303" y="714" class="m" style="font-family:'Noto Serif CJK SC',serif;font-size:15px;font-weight:bold;fill:#fff">设</text>
</svg>
</body>
</html>
